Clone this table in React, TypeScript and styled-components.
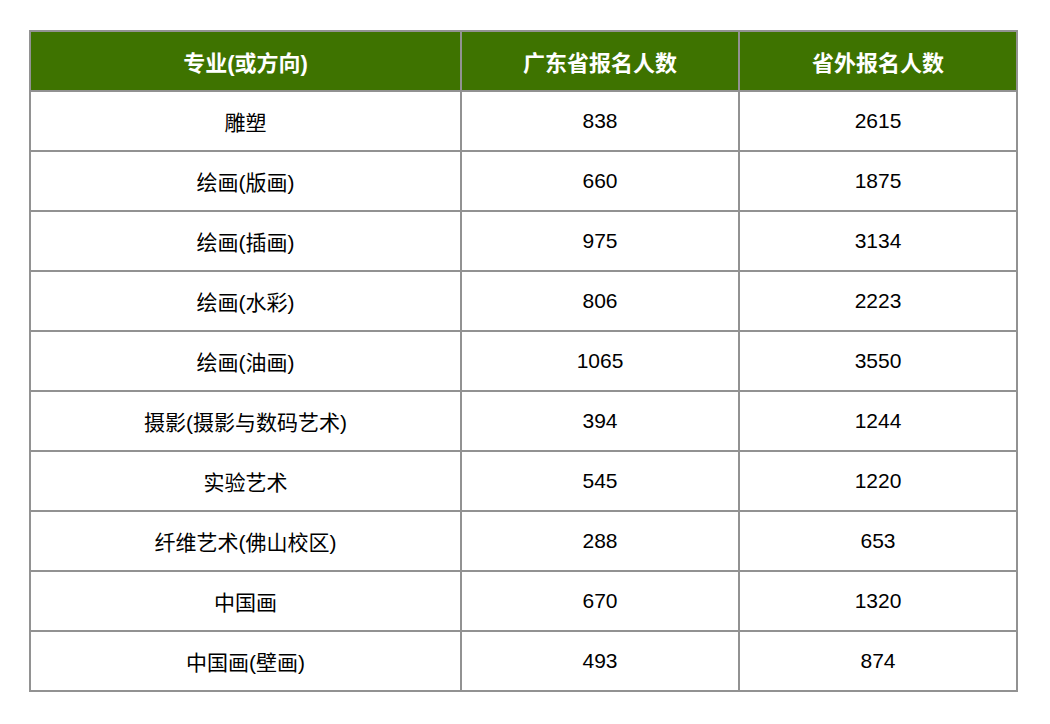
import React from "react";
import styled, { createGlobalStyle } from "styled-components";

const Global = createGlobalStyle`
  html, body { margin: 0; padding: 0; background: #fff; }
  body { font-family: "Liberation Sans", "Noto Sans CJK SC", sans-serif; }
`;

const Page = styled.div`
  padding: 30px 0 0 29px;
`;

const Table = styled.table`
  width: 987px;
  border-collapse: collapse;
  table-layout: fixed;
`;

const Col = styled.col<{ $w: number }>`
  width: ${(p) => p.$w}px;
`;

const HeadCell = styled.th`
  height: 58px;
  padding: 0;
  background: #3e7300;
  color: #fff;
  font-size: 22px;
  font-weight: 600;
  text-align: center;
  vertical-align: middle;
  border: 2px solid #929292;
`;

const Cell = styled.td`
  height: 58px;
  padding: 0;
  color: #000;
  font-size: 21px;
  text-align: center;
  vertical-align: middle;
  border: 2px solid #929292;
`;

const rows: [string, string, string][] = [
  ["雕塑", "838", "2615"],
  ["绘画(版画)", "660", "1875"],
  ["绘画(插画)", "975", "3134"],
  ["绘画(水彩)", "806", "2223"],
  ["绘画(油画)", "1065", "3550"],
  ["摄影(摄影与数码艺术)", "394", "1244"],
  ["实验艺术", "545", "1220"],
  ["纤维艺术(佛山校区)", "288", "653"],
  ["中国画", "670", "1320"],
  ["中国画(壁画)", "493", "874"],
];

export default function App() {
  return (
    <>
      <Global />
      <Page>
        <Table>
          <colgroup>
            <Col $w={431} />
            <Col $w={278} />
            <Col $w={278} />
          </colgroup>
          <thead>
            <tr>
              <HeadCell>专业(或方向)</HeadCell>
              <HeadCell>广东省报名人数</HeadCell>
              <HeadCell>省外报名人数</HeadCell>
            </tr>
          </thead>
          <tbody>
            {rows.map((r) => (
              <tr key={r[0]}>
                <Cell>{r[0]}</Cell>
                <Cell>{r[1]}</Cell>
                <Cell>{r[2]}</Cell>
              </tr>
            ))}
          </tbody>
        </Table>
      </Page>
    </>
  );
}
